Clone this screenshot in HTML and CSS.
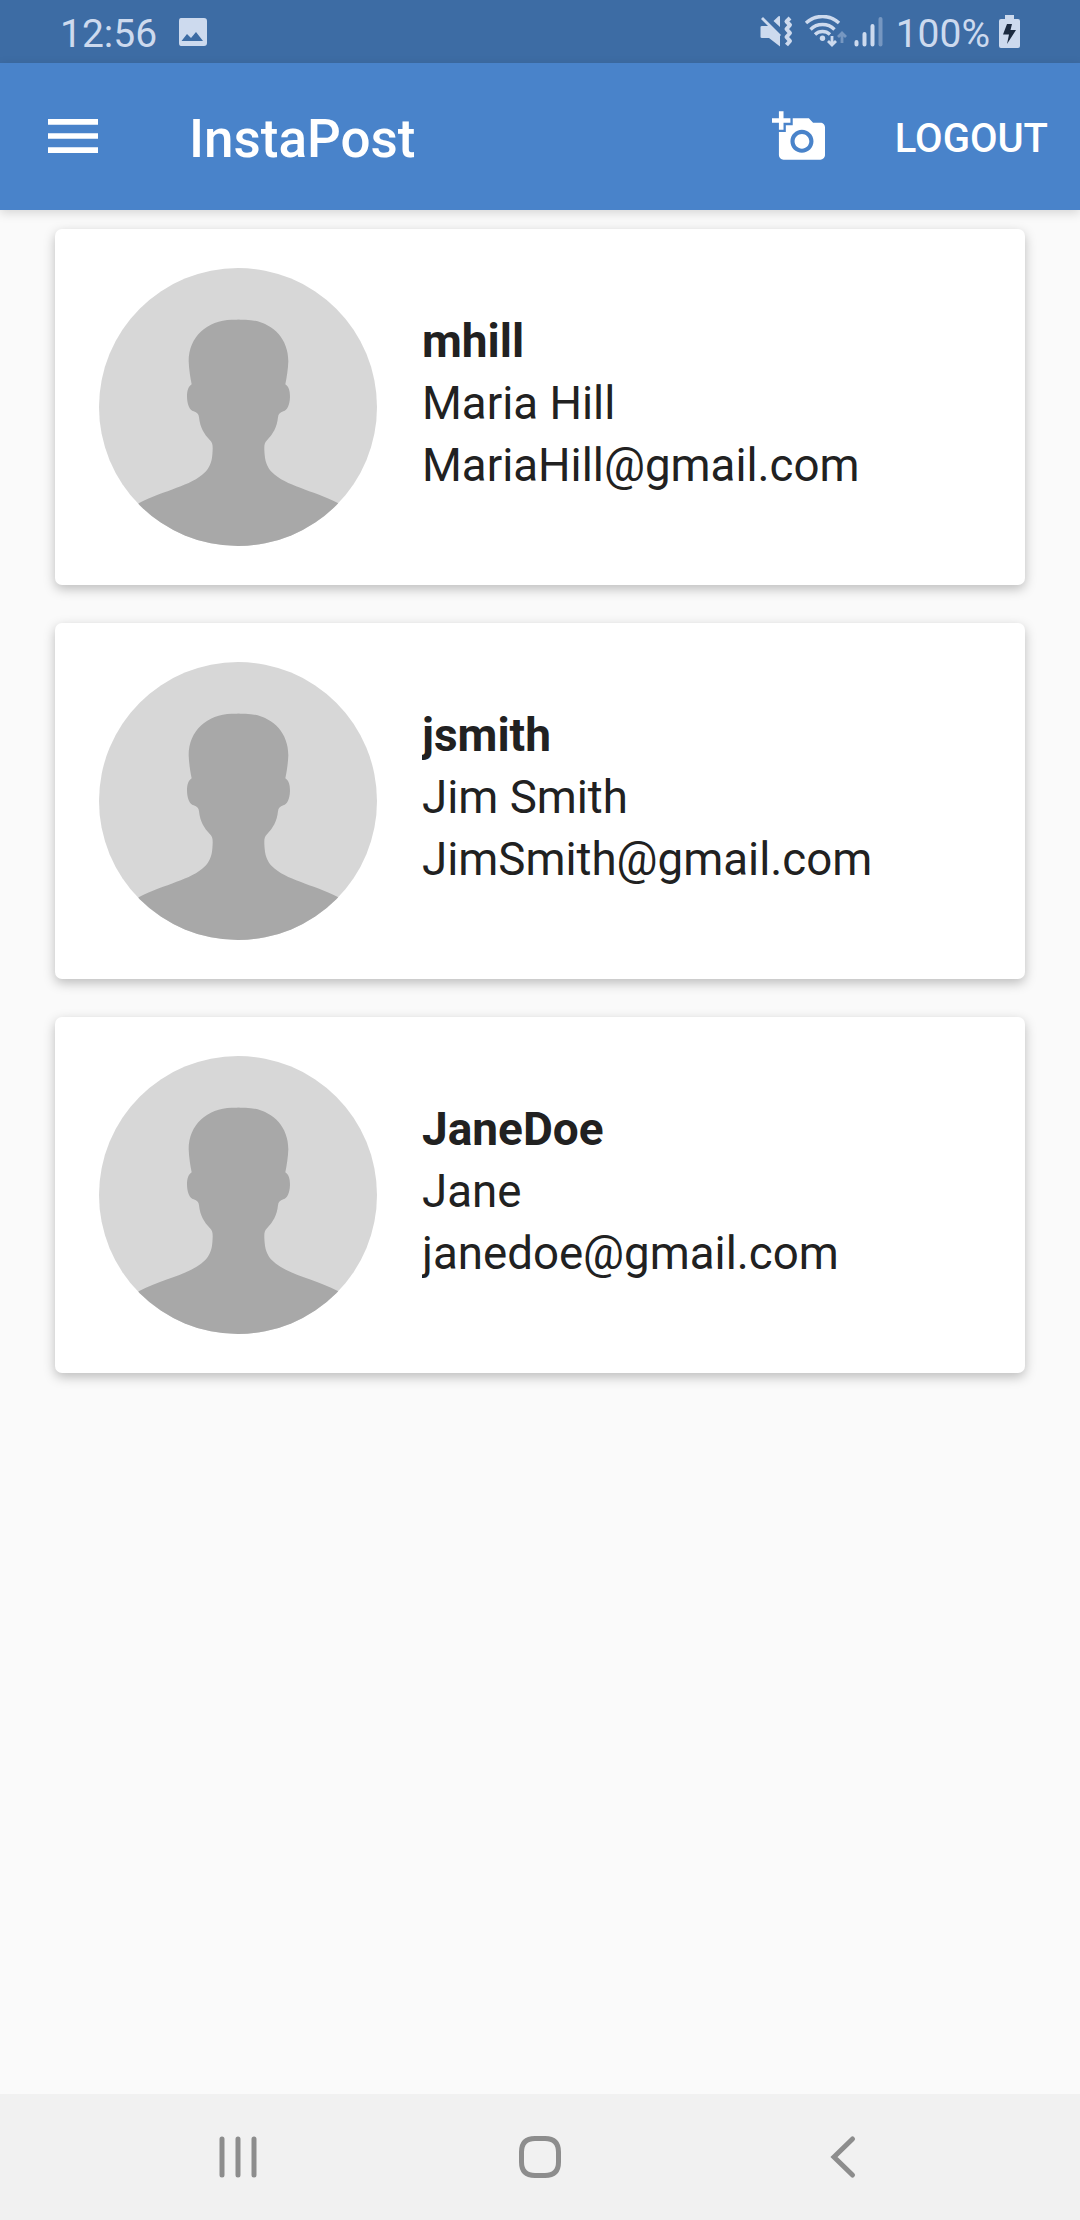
FILE: index.html
```html
<!DOCTYPE html>
<html lang="en">
<head>
<meta charset="utf-8">
<title>InstaPost</title>
<link rel="stylesheet" href="styles.css">
</head>
<body>
<svg class="defs" aria-hidden="true">
  <symbol id="avatar" viewBox="0 0 834 834">
    <clipPath id="avatar-clip"><circle cx="417" cy="417" r="417"/></clipPath>
    <circle cx="417" cy="417" r="417" fill="#d7d7d7"/>
    <g clip-path="url(#avatar-clip)" fill="#a8a8a8">
      <path id="half" d="M422 155H398C325 157 269 205 269 280C270 305 274 330 278 349C268 356 264 368 264 387C265 412 272 426 284 430C294 434 299 438 300 448C303 478 315 498 333 517C342 527 342 533 340 560C338 585 330 600 318 613C275 655 200 665 119 706L60 834H422Z"/>
      <use href="#half" transform="translate(837 0) scale(-1 1)"/>
    </g>
  </symbol>
</svg>
<div class="screen">
  <div class="status">
    <span class="time">12:56</span>
    <svg class="photo" width="30" height="30" viewBox="0 0 30 30"><path fill-rule="evenodd" d="M3 1H26Q29 1 29 4V26Q29 29 26 29H3Q1 29 1 26V4Q1 1 3 1ZM3.500 24H25L18 15L13 21L9 17Z"/></svg>
    <svg class="signals" width="126" height="34" viewBox="0 0 126 34">
      <path d="M2 11H10L20 21V31.500L9 23H2Q0.500 23 0.500 22V12Q0.500 11 2 11ZM13.500 6L18.500 1.200Q20 0.500 20 2V12Z"/>
      <path class="line" d="M2 3L20 21"/>
      <path class="line wave" d="M30 3L26.500 6.500L30 10L26.500 14L30 18L26.500 22L30 26L26.500 30"/>
      <path class="line arc" d="M46 8A24 24 0 0 1 79 8M50.500 14.500A17 17 0 0 1 74.500 14.500M55 19.500A11 11 0 0 1 70 19.500"/>
      <circle cx="62.500" cy="23.300" r="2.700"/>
      <path class="line" d="M72 21V30M68 26L72 30L76 26"/>
      <path class="line faint" d="M82 28V18M78 22L82 18L86 22"/>
      <path class="line thick" d="M96.500 27V29.500M104.500 19V29.500M112.500 11V29.500"/><path class="line thick faint" d="M120.500 4V29.500"/>
    </svg>
    <span class="percent">100%</span>
    <svg class="battery" width="21" height="33" viewBox="0 0 21 33"><path d="M6 0H15V4H19Q21 4 21 6V31Q21 33 19 33H2Q0 33 0 31V6Q0 4 2 4H6Z"/><path fill="#1c2b40" d="M8 9H13L11.500 15H17L8 29L10 19.500H4Z"/></svg>
  </div>
  <header class="appbar">
    <svg class="menu" width="50" height="35" viewBox="0 0 50 35"><path d="M0 0H50V5.700H0ZM0 14.200H50V19.700H0ZM0 28.200H50V34H0Z"/></svg>
    <h1 class="title">InstaPost</h1>
    <svg class="camera" width="55.300" height="55.300" viewBox="0 0 24 24"><path d="M3 4V1h2v3h3v2H5v3H3V6H0V4h3zm3 6V7h3V4h7l1.830 2H21c1.100 0 2 .9 2 2v12c0 1.100-.9 2-2 2H5c-1.100 0-2-.9-2-2V10h3zm7 9c2.760 0 5-2.240 5-5s-2.240-5-5-5-5 2.240-5 5 2.240 5 5 5zm-3.200-5c0 1.770 1.430 3.200 3.200 3.200s3.200-1.430 3.200-3.200-1.430-3.200-3.200-3.200-3.200 1.430-3.200 3.200z"/></svg>
    <span class="logout">LOGOUT</span>
  </header>
  <main class="list">
    <article class="card"><svg class="avatar"><use href="#avatar"/></svg><div class="info"><b>mhill</b><span>Maria Hill</span><span>MariaHill@gmail.com</span></div></article>
    <article class="card"><svg class="avatar"><use href="#avatar"/></svg><div class="info"><b>jsmith</b><span>Jim Smith</span><span>JimSmith@gmail.com</span></div></article>
    <article class="card"><svg class="avatar"><use href="#avatar"/></svg><div class="info"><b>JaneDoe</b><span>Jane</span><span>janedoe@gmail.com</span></div></article>
  </main>
  <nav class="nav">
    <svg width="44" height="44" viewBox="0 0 44 44"><path d="M6 4V40M22 4V40M38 4V40"/></svg>
    <svg width="44" height="44" viewBox="0 0 44 44"><path d="M22 3.500H27Q40.500 3.500 40.500 17V27Q40.500 40.500 27 40.500H17Q3.500 40.500 3.500 27V17Q3.500 3.500 17 3.500Z"/></svg>
    <svg width="44" height="44" viewBox="0 0 44 44"><path d="M32.500 4L14 22L32.500 40"/></svg>
  </nav>
</div>
</body>
</html>
```
FILE: styles.css
```css
* { box-sizing: border-box; }
body { margin: 0; background: #fafafa; font-family: Roboto, "Liberation Sans", sans-serif; color: #212121; }
.defs { position: absolute; width: 0; height: 0; }
.screen { width: 1080px; height: 2220px; display: flex; flex-direction: column; }
.status { height: 63px; flex: none; background: #3d6ca4; color: #cddaee; fill: #cddaee; display: flex; padding: 0 60px; font-size: 39px; line-height: 68px; }
.photo { margin: 17px 0 0 21px; }
.signals { margin: 15px 10px 0 auto; }
.line { fill: none; stroke: #cddaee; stroke-width: 2.800; }
.wave { stroke-width: 4; stroke-linejoin: round; }
.arc { stroke-width: 3.400; }
.thick { stroke-width: 4; stroke-linecap: round; }
.faint { opacity: .4; }
.battery { margin: 15px 0 0 9px; }
.appbar { height: 147px; flex: none; background: #4983ca; color: #fff; fill: #fff; display: flex; padding: 0 32px 0 48px; box-shadow: 0 3px 10px rgba(0,0,0,.15); line-height: 148px; }
.menu { margin-top: 56px; }
.title { margin: 2px 0 0 91px; font-size: 53px; font-weight: 500; }
.camera { margin: 46px 67px 0 auto; }
.logout { font-size: 40px; font-weight: 500; line-height: 152px; }
.list { flex: 1; padding: 19px 55px 0; display: flex; flex-direction: column; gap: 38px; }
.card { height: 356px; display: flex; padding: 39px 44px; background: #fff; border-radius: 7px; box-shadow: 0 4px 12px rgba(0,0,0,.25); }
.avatar { width: 278px; height: 278px; flex: none; }
.info { margin-left: 45px; padding-top: 42px; display: flex; flex-direction: column; overflow: hidden; font-size: 45.650px; line-height: 62px; }
.info b { font-size: 46px; margin-bottom: 1px; }
.nav { height: 126px; flex: none; background: #f1f1f1; display: flex; justify-content: space-between; padding: 41px 216px 0; fill: none; stroke: #8d8d8d; stroke-width: 5; stroke-linecap: round; }
```
